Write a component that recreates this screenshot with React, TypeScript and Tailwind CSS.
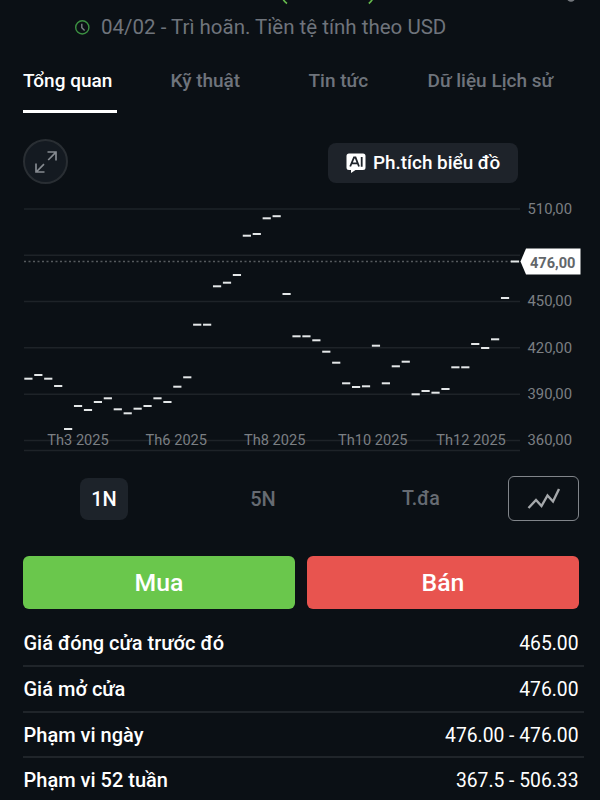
import React from "react";

const PITCH = 9.93;
const LEVELS = [
  378.7, 375, 378.7, 386, 429, 406, 410, 402, 398.3, 409.3, 413.3, 408.7, 406,
  398.3, 402, 386.7, 377.3, 324.7, 324.7, 286.3, 282.7, 275, 235.7, 234, 218.3,
  216.2, 294, 336.3, 336.3, 340.3, 351.7, 362.7, 383.3, 387, 386.3, 345.7,
  383.3, 366.3, 361.7, 394.3, 391, 392.7, 389, 367.3, 367.3, 344, 348, 339.3,
  298, 261.5,
];
const GRID = [209, 255.3, 301.5, 347.8, 394.2, 440.5, 450.5];
const PRICES: [string, number][] = [
  ["510,00", 214],
  ["450,00", 306],
  ["420,00", 352.5],
  ["390,00", 399],
  ["360,00", 445.3],
];
const MONTHS: [string, number][] = [
  ["Th3 2025", 78],
  ["Th6 2025", 176.3],
  ["Th8 2025", 274.7],
  ["Th10 2025", 372.8],
  ["Th12 2025", 471],
];
const ROWS = [
  ["Giá đóng cửa trước đó", "465.00"],
  ["Giá mở cửa", "476.00"],
  ["Phạm vi ngày", "476.00 - 476.00"],
  ["Phạm vi 52 tuần", "367.5 - 506.33"],
];

function Chart() {
  return (
    <svg width="600" height="262" viewBox="0 196 600 262" className="block shrink-0">
      {GRID.map((y) => (
        <line key={y} x1="24" x2="520" y1={y} y2={y} stroke="#1e2328" strokeWidth="1.4" />
      ))}
      <line x1="24" x2="512" y1="261.5" y2="261.5" stroke="#565a5e" strokeWidth="1.3" strokeDasharray="2 2.5" />
      {LEVELS.map((y, i) => (
        <rect key={i} x={24.3 + i * PITCH} y={y - 1} width="8.2" height="2" fill="#e4e7e8" />
      ))}
      {MONTHS.map(([t, x]) => (
        <text key={t} x={x} y="445.3" textAnchor="middle" fontSize="14.6" fill="#7b7f83">{t}</text>
      ))}
      {PRICES.map(([t, y]) => (
        <text key={t} x="527.5" y={y} fontSize="14.8" fill="#7b7f83">{t}</text>
      ))}
      <path d="M520.5 261.5L526 248.5H580.5V274.5H526Z" fill="#fff" />
      <text x="530" y="267.7" fontSize="14.6" fontWeight="700" fill="#62666a">476,00</text>
    </svg>
  );
}

export default function App() {
  return (
    <div className="flex h-[800px] w-[600px] flex-col overflow-hidden bg-[#0b1015] font-['Roboto','Noto_Sans',sans-serif] text-white">
      <header className="relative flex h-[56px] shrink-0 items-start pl-[75px] pt-[15px]">
        <svg className="absolute left-0 top-0" width="600" height="6" viewBox="0 0 600 6">
          <path d="M282.5 -2Q284 1.5 287 3.5M373 -2Q371.5 1.5 368.8 3.5" fill="none" stroke="#64b84c" strokeWidth="1.7" />
          <circle cx="571" cy="-2.5" r="4.3" fill="#74787d" />
        </svg>
        <svg width="15" height="15" viewBox="0 0 15 15" className="mt-[5px]" fill="none">
          <circle cx="7.3" cy="7.4" r="6.6" stroke="#3c9142" strokeWidth="1.4" />
          <path d="M6.8 3.7V7.8L9.6 10.4" stroke="#7c8287" strokeWidth="1.4" />
        </svg>
        <p className="ml-[11px] whitespace-nowrap text-[20.5px] leading-6 text-[#6f747c]">04/02 - Trì hoãn. Tiền tệ tính theo USD</p>
      </header>
      <nav className="flex h-[57px] shrink-0 whitespace-nowrap pl-[23px] text-[19px] font-medium leading-[50px] text-[#6f747c]">
        <span className="h-full w-[94px] border-b-[3px] border-white text-white">Tổng quan</span>
        <span className="ml-[53.5px] w-[138px]">Kỹ thuật</span>
        <span className="w-[119px]">Tin tức</span>
        <span>Dữ liệu Lịch sử</span>
      </nav>
      <div className="flex h-[83px] shrink-0 items-start justify-between pl-[23px] pr-[82px] pt-[26px]">
        <button className="flex h-[45px] w-[45px] items-center justify-center rounded-full border-2 border-[#292e33] bg-[#141a21]">
          <svg width="24" height="24" viewBox="0 0 24 24" fill="none" stroke="#858a90" strokeWidth="1.7">
            <path d="M14.2 10L22 2.2M13.5 2H22V10.5M10 14.2L2.2 22M2 13.5V22H10.5" />
          </svg>
        </button>
        <button className="mt-[4px] flex h-[40px] w-[190px] items-center rounded-lg bg-[#1e232a] pl-[18px]">
          <svg width="20" height="20" viewBox="0 0 20 20">
            <path d="M3 .5H17Q19.5 .5 19.5 3V14.5Q19.5 17 17 17H9.5L5 20V17H3Q.5 17 .5 14.5V3Q.5 .5 3 .5Z" fill="#fff" />
            <path d="M4.2 13.5L8 4.5H9.5L13 13.5M5.8 10.4H11.6M15.7 4V13.7" stroke="#1e232a" strokeWidth="1.8" fill="none" />
          </svg>
          <span className="ml-[7px] whitespace-nowrap text-[18.9px] font-medium">Ph.tích biểu đồ</span>
        </button>
      </div>
      <Chart />
      <div className="flex h-[98px] shrink-0 items-start pl-[80px] pr-[21px] pt-[18px] text-[20px] font-medium text-[#666b72]">
        <span className="mt-[2px] flex h-[42px] w-[48px] items-center justify-center rounded-lg bg-[#1d232a] text-white">1N</span>
        <span className="ml-[111px] mt-[2px] flex h-[42px] w-[48px] items-center justify-center">5N</span>
        <span className="ml-[110px] mt-[2px] flex h-[42px] w-[48px] items-center justify-center text-[19.6px]">T.đa</span>
        <button className="ml-auto flex h-[45px] w-[71px] items-center justify-center rounded-md border-[1.5px] border-[#81858a]">
          <svg width="34" height="24" viewBox="0 0 34 24" fill="none" stroke="#a5a8ab" strokeWidth="2.4">
            <path d="M1.5 21L9 13L14.5 19L20.5 8.5L26 14.5L32 2" />
          </svg>
        </button>
      </div>
      <div className="flex h-[53px] shrink-0 gap-[12px] pl-[23px] pr-[21px] text-[24.8px] font-medium">
        <button className="flex-1 rounded-md bg-[#6ac74c] pt-px">Mua</button>
        <button className="flex-1 rounded-md bg-[#e8544f] pt-px">Bán</button>
      </div>
      <div className="flex flex-col pl-[23px] pr-[16px] pt-[12px] text-[20px] leading-[45px]">
        {ROWS.map(([label, value]) => (
          <div key={label} className="flex h-[45.8px] shrink-0 justify-between whitespace-nowrap border-b-2 border-[#20252a] pl-[0.5px] pr-[5.5px]">
            <span className="font-medium">{label}</span>
            <span className="text-[19.3px]">{value}</span>
          </div>
        ))}
      </div>
    </div>
  );
}
